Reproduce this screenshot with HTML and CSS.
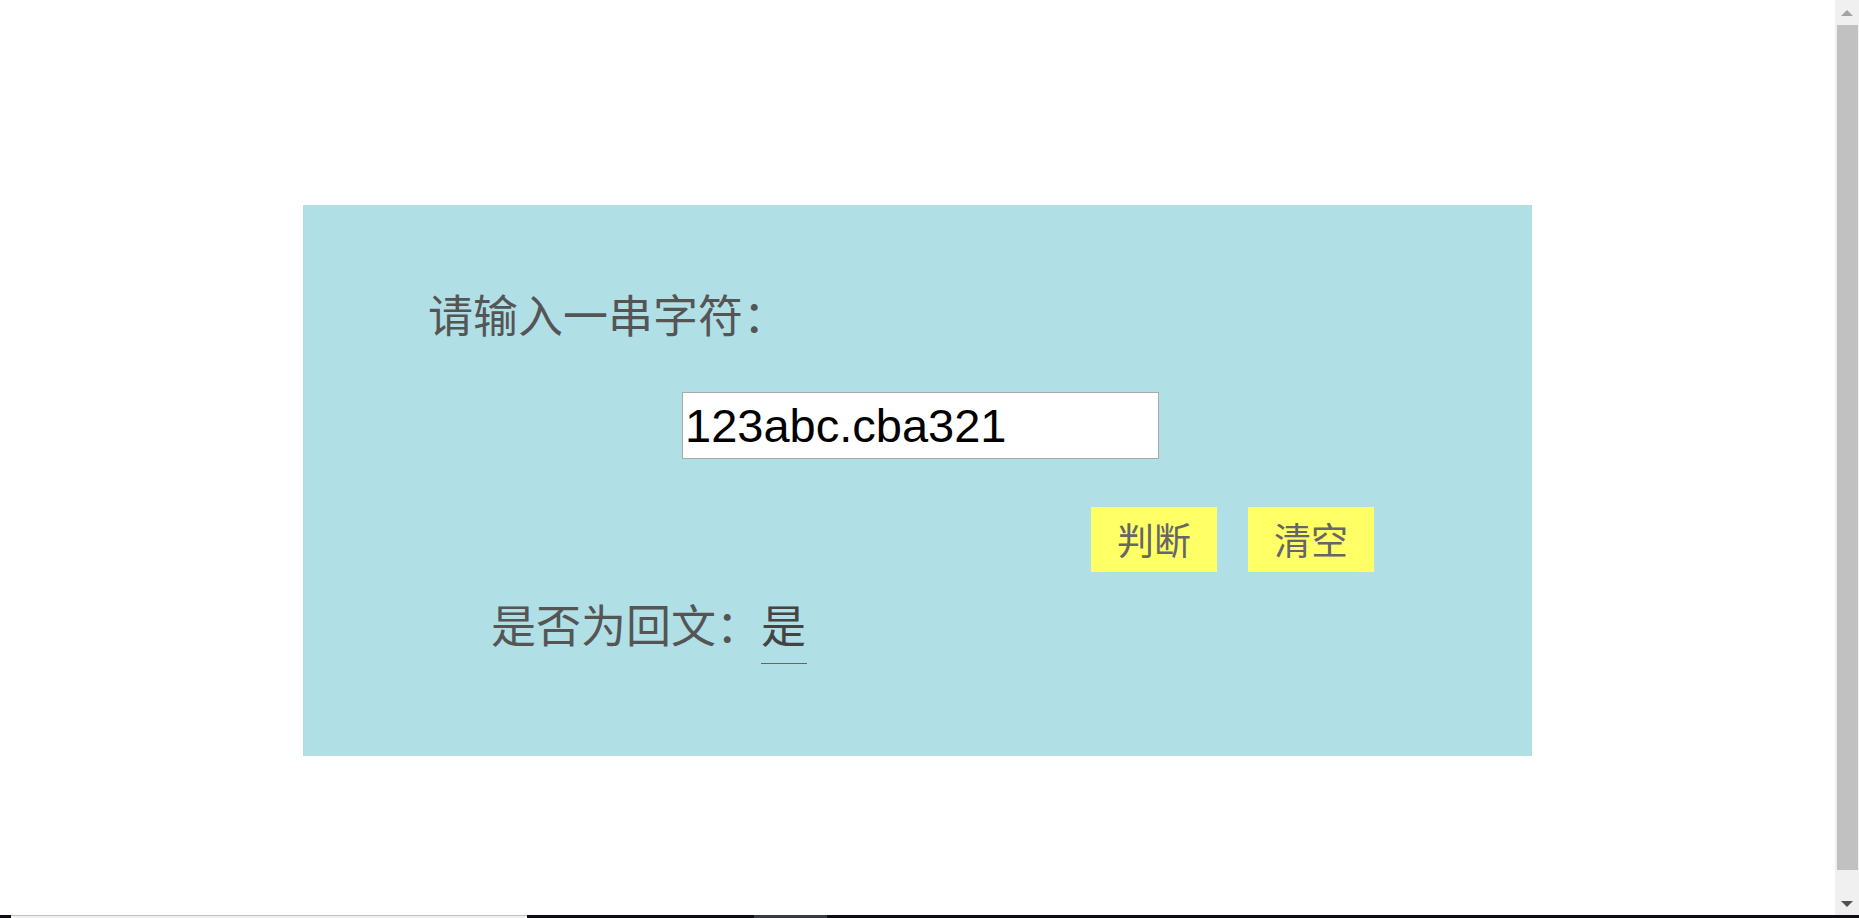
FILE: index.html
```html
<!DOCTYPE html>
<html lang="zh-CN">
<head>
<meta charset="utf-8">
<title>回文判断</title>
<link rel="stylesheet" href="styles.css">
</head>
<body>
<div class="page">
  <div class="panel">
    <p class="prompt">请输入一串字符：</p>
    <div class="input-row"><input class="text-input" type="text" value="123abc.cba321"></div>
    <div class="btn-row">
      <button class="btn">判断</button>
      <button class="btn">清空</button>
    </div>
    <p class="result">是否为回文：<span class="answer">是</span></p>
  </div>
</div>
<div class="vscroll">
  <div class="arrow-up"></div>
  <div class="thumb"></div>
  <div class="arrow-down"></div>
</div>
<div class="hstrip">
  <div class="hs-dark-a"></div>
  <div class="hs-light"></div>
  <div class="hs-dark-b"></div>
  <div class="hs-gray"></div>
  <div class="hs-dark-c"></div>
</div>
</body>
</html>
```
FILE: styles.css
```css
html, body {
  margin: 0;
  padding: 0;
  background: #ffffff;
  overflow: hidden;
}
body {
  font-family: "Noto Sans CJK SC", "Noto Sans", sans-serif;
}
.page {
  width: 1835px;
  height: 918px;
  padding-top: 205px;
  box-sizing: border-box;
}
.panel {
  width: 1229px;
  height: 551px;
  margin: 0 auto;
  background: #b0e0e6;
  box-sizing: border-box;
  padding-top: 86px;
}
.prompt {
  margin: 0;
  padding-left: 125px;
  font-size: 45px;
  line-height: 46px;
  color: #555555;
}
.input-row {
  margin-top: 55px;
  padding-left: 379px;
  display: flex;
}
.text-input {
  width: 477px;
  height: 67px;
  box-sizing: border-box;
  border: 1px solid #a9a9a9;
  padding: 0 2px;
  margin: 0;
  background: #ffffff;
  font-family: "Liberation Sans", Arial, sans-serif;
  font-size: 47px;
  color: #000000;
  outline: none;
}
.btn-row {
  margin-top: 48px;
  display: flex;
  justify-content: flex-end;
  gap: 31px;
  padding-right: 158px;
}
.btn {
  width: 126px;
  height: 65px;
  margin: 0;
  padding: 0;
  border: none;
  background: #ffff66;
  font-family: "Noto Sans CJK SC", sans-serif;
  font-size: 37px;
  line-height: 65px;
  color: #666666;
}
.result {
  margin: 29px 0 0 0;
  padding-left: 188px;
  font-size: 45px;
  line-height: 46px;
  color: #555555;
}
.answer {
  display: inline-block;
  width: 46px;
  padding-bottom: 16px;
  border-bottom: 1px solid #666666;
  color: #444444;
  vertical-align: top;
}
.vscroll {
  position: fixed;
  top: 0;
  right: 0;
  width: 24px;
  height: 915px;
  background: #f0f0f0;
}
.arrow-up {
  position: absolute;
  top: 10px;
  left: 6px;
  width: 0;
  height: 0;
  border-left: 6px solid transparent;
  border-right: 6px solid transparent;
  border-bottom: 6px solid #a3a3a3;
}
.thumb {
  position: absolute;
  top: 25px;
  left: 2px;
  width: 21px;
  height: 845px;
  background: #c1c1c1;
}
.arrow-down {
  position: absolute;
  top: 901px;
  left: 6px;
  width: 0;
  height: 0;
  border-left: 6px solid transparent;
  border-right: 6px solid transparent;
  border-top: 6px solid #505050;
}
.hstrip {
  position: fixed;
  left: 0;
  bottom: 0;
  width: 100%;
  height: 3px;
  display: flex;
}
.hs-dark-a { width: 11px; background: #0b0f15; }
.hs-light { width: 516px; background: #f0f0f0; border-top: 1px solid #c0c0c0; box-sizing: border-box; }
.hs-dark-b { width: 227px; background: #0b0f15; }
.hs-gray { width: 73px; background: #3a3a44; }
.hs-dark-c { flex: 1; background: #0b0f15; }
```
